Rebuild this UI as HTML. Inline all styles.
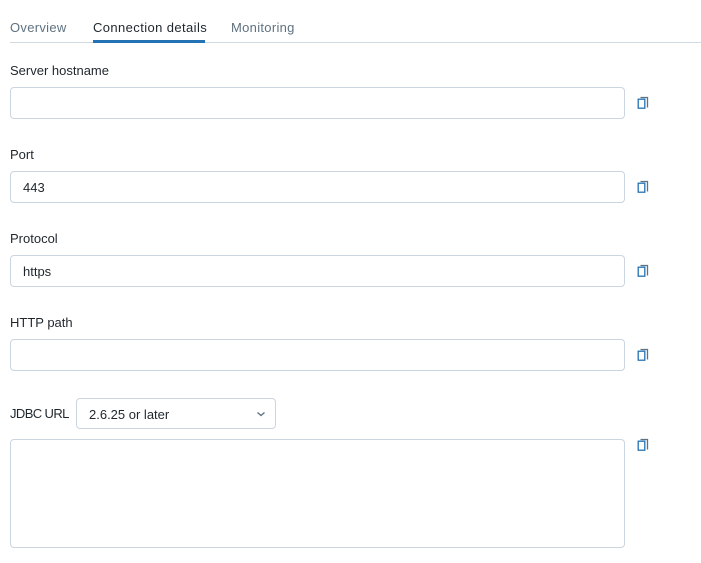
<!DOCTYPE html><html><head><style>
body{margin:0;background:#fff;font-family:"Liberation Sans",sans-serif;font-size:13px;color:#1f272d;width:701px;height:563px;position:relative;overflow:hidden}
.a{position:absolute}
.tab{position:absolute;top:20px;font-size:13px;color:#5f7281;letter-spacing:0.3px}
.in{position:absolute;left:10px;width:615px;height:30px;border:1px solid #cbd5df;border-radius:4px;box-sizing:border-box}
.in span{position:absolute;left:12px;top:8px}
.lb{position:absolute;left:10px}
.cp{position:absolute;left:637px}
</style></head><body>
<div class="tab" style="left:10px">Overview</div>
<div class="tab" style="left:93px;color:#1f272d;letter-spacing:0.4px">Connection details</div>
<div class="tab" style="left:231px">Monitoring</div>
<div class="a" style="left:10px;top:42px;width:691px;height:1px;background:#d1d9e1"></div>
<div class="a" style="left:93px;top:40px;width:112px;height:3px;background:#2272b4"></div>

<div class="lb" style="top:63px">Server hostname</div>
<div class="in" style="top:87px;height:32px"></div>
<div class="lb" style="top:147px">Port</div>
<div class="in" style="top:171px;height:32px"><span>443</span></div>
<div class="lb" style="top:231px">Protocol</div>
<div class="in" style="top:255px;height:32px"><span>https</span></div>
<div class="lb" style="top:315px">HTTP path</div>
<div class="in" style="top:339px;height:32px"></div>
<div class="lb" style="top:406px;letter-spacing:-0.6px">JDBC URL</div>
<div class="a" style="left:76px;top:398px;width:200px;height:31px;border:1px solid #cbd5df;border-radius:4px;box-sizing:border-box"><span class="a" style="left:12px;top:8px">2.6.25 or later</span>
<svg class="a" style="left:179px;top:11px" width="10" height="8"><path d="M1.5 2.5L5 5.5L8.5 2.5" fill="none" stroke="#5f7281" stroke-width="1.4"/></svg></div>
<div class="in" style="top:439px;height:109px"></div>

<svg class="cp" style="top:96px" width="12" height="14"><path d="M3.5 1.5h7v10" fill="none" stroke="#5f7281" stroke-width="1.3"/><rect x="1.2" y="3.2" width="6.6" height="9" fill="none" stroke="#2272b4" stroke-width="1.3"/></svg>
<svg class="cp" style="top:180px" width="12" height="14"><path d="M3.5 1.5h7v10" fill="none" stroke="#5f7281" stroke-width="1.3"/><rect x="1.2" y="3.2" width="6.6" height="9" fill="none" stroke="#2272b4" stroke-width="1.3"/></svg>
<svg class="cp" style="top:264px" width="12" height="14"><path d="M3.5 1.5h7v10" fill="none" stroke="#5f7281" stroke-width="1.3"/><rect x="1.2" y="3.2" width="6.6" height="9" fill="none" stroke="#2272b4" stroke-width="1.3"/></svg>
<svg class="cp" style="top:348px" width="12" height="14"><path d="M3.5 1.5h7v10" fill="none" stroke="#5f7281" stroke-width="1.3"/><rect x="1.2" y="3.2" width="6.6" height="9" fill="none" stroke="#2272b4" stroke-width="1.3"/></svg>
<svg class="cp" style="top:438px" width="12" height="14"><path d="M3.5 1.5h7v10" fill="none" stroke="#5f7281" stroke-width="1.3"/><rect x="1.2" y="3.2" width="6.6" height="9" fill="none" stroke="#2272b4" stroke-width="1.3"/></svg>
</body></html>
